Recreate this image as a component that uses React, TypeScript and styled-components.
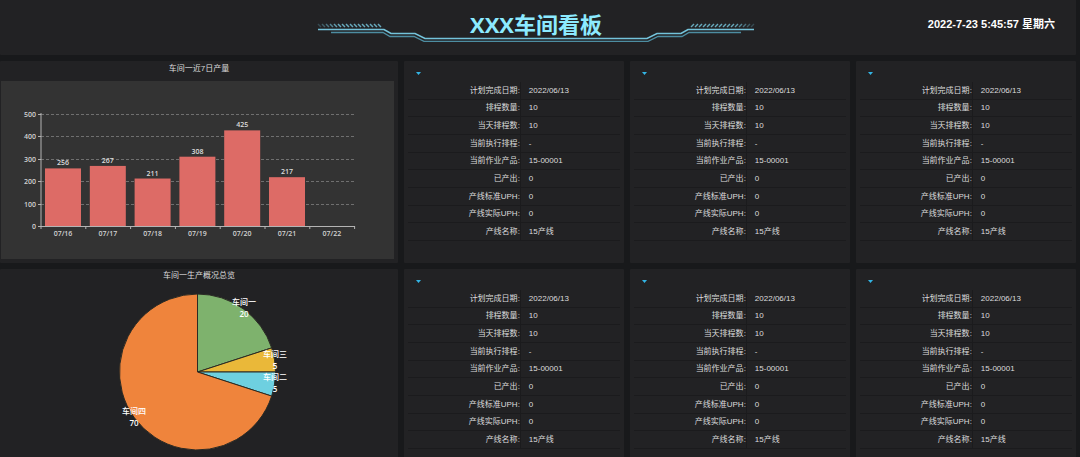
import React from "react";
import styled, { createGlobalStyle } from "styled-components";

const uiFont = `"Liberation Sans", "Noto Sans CJK SC", sans-serif`;
const chartFont = `"Open Sans", "Noto Sans CJK SC", sans-serif`;

const GlobalStyle = createGlobalStyle`
  * { box-sizing: border-box; }
  html, body { margin: 0; background: #18191b; }
  html { height: 100%; overflow: hidden; }
  body { height: 100%; overflow: hidden; color: #dcdcdc; font-family: ${uiFont}; font-size: 8px; }
`;

const Page = styled.div`
  display: flex;
  flex-direction: column;
  gap: 6px;
  padding-right: 4px;
`;

const Header = styled.header`
  display: grid;
  grid-template-columns: 1fr auto 1fr;
  background: #222224;
  border-radius: 0 0 1px 1px;
`;

const TitleBlock = styled.div`
  grid-column: 2;
  display: grid;
  grid-template-rows: 35px;
  justify-items: center;
  padding: 9px 4px 11px 0;
  > * { grid-area: 1 / 1; }
`;

const Title = styled.h1`
  margin: 0;
  font-family: ${chartFont};
  font-size: 22px;
  line-height: 30px;
  font-weight: 700;
  color: #8ceaff;
`;

const Ornament = styled.svg`
  display: block;
  align-self: end;
`;

const Clock = styled.time`
  justify-self: end;
  padding: 16px 21px 0 0;
  font: 700 11px/16px ${uiFont};
  color: #fff;
`;

const Board = styled.main`
  display: grid;
  grid-template-columns: 398fr 220fr 220fr 220fr;
  grid-auto-rows: 202px;
  gap: 6px;
`;

const Panel = styled.section`
  display: flex;
  flex-direction: column;
  min-width: 0;
  background: #222224;
  border-radius: 1px;
`;

const PanelTitle = styled.h2`
  margin: 0;
  font-size: 8px;
  line-height: 14px;
  font-weight: 400;
  text-align: center;
`;

const ChartTitle = styled(PanelTitle)`
  padding: 1px 0 5px;
`;

const ChartArea = styled.div`
  flex: 1;
  min-height: 0;
  margin: 0 4px 4px 1px;
  background: #333;
`;

const Drawing = styled.svg`
  display: block;
  width: 100%;
  height: 100%;
  font-family: ${chartFont};
  font-size: 7px;
  font-weight: 600;
`;

const PieLabel = styled.g`
  font-size: 8px;
  font-weight: 500;
  text-anchor: middle;
  fill: #fff;
`;

const PieValue = styled.text`
  font-weight: 600;
`;

const PieArea = styled.div`
  flex: 1;
  min-height: 0;
`;

const LineCard = styled(Panel)`
  padding: 8px 4px 0;
`;

const LineSelect = styled.button`
  align-self: flex-start;
  display: flex;
  align-items: center;
  height: 8px;
  margin: 0 0 5px 8px;
  padding: 0;
  border: 0;
  background: none;
`;

const DataTable = styled.table`
  width: 100%;
  height: 159px;
  border-collapse: collapse;
  table-layout: fixed;
`;

const Label = styled.th`
  width: 53%;
  padding: 1px 0 0;
  border-right: 1px solid #1b1b1d;
  border-bottom: 1px solid #1b1b1d;
  font-weight: 400;
  line-height: 12px;
  text-align: right;
  white-space: nowrap;
`;

const Value = styled.td`
  padding: 1px 0 0 8px;
  border-bottom: 1px solid #1b1b1d;
  line-height: 12px;
`;

const daily = [
  { day: "07/16", count: 256 },
  { day: "07/17", count: 267 },
  { day: "07/18", count: 211 },
  { day: "07/19", count: 308 },
  { day: "07/20", count: 425 },
  { day: "07/21", count: 217 },
  { day: "07/22", count: 0 },
];

const shares = [
  { name: "车间一", value: 20, color: "#7eb26d", x: 244, y: 21 },
  { name: "车间三", value: 5, color: "#eab839", x: 275, y: 73 },
  { name: "车间二", value: 5, color: "#6ed0e0", x: 275, y: 96 },
  { name: "车间四", value: 70, color: "#ef843c", x: 134, y: 130 },
];

const lineFields = [
  ["计划完成日期", "2022/06/13"],
  ["排程数量", "10"],
  ["当天排程数", "10"],
  ["当前执行排程", "-"],
  ["当前作业产品", "15-00001"],
  ["已产出", "0"],
  ["产线标准UPH", "0"],
  ["产线实际UPH", "0"],
  ["产线名称", "15产线"],
];

function HeaderOrnament() {
  const ticks = Array.from({ length: 16 }, (_, i) => i);
  const half = (
    <>
      {ticks.map((i) => (
        <path key={i} d={`M${1 + i * 4} 2l3 3`} stroke="#67a9bc" strokeWidth="1.5" opacity={Math.min(1, 0.3 + i * 0.15)} />
      ))}
      <path d="M1 7.5H67L74 11.5H98L108 16.5H219" stroke="#74c3da" strokeWidth="1.6" />
      <path d="M14 10.5H66L73 14.5H97L107 19.3H219" stroke="#4d8da1" strokeWidth="1.3" />
    </>
  );
  return (
    <Ornament width="438" height="22" viewBox="0 0 438 22" fill="none" aria-hidden="true">
      <g>{half}</g>
      <g transform="translate(438 0) scale(-1 1)">{half}</g>
    </Ornament>
  );
}

function BarChart() {
  const baseY = 145;
  const left = 40;
  const step = 44.8;
  const scale = 112.5 / 500;
  return (
    <Drawing viewBox="0 0 393 178" role="img" aria-label="车间一近7日产量">
      {[0, 100, 200, 300, 400, 500].map((v) => {
        const y = Math.round(baseY - v * scale) + 0.5;
        return (
          <g key={v}>
            {v > 0 && <path d={`M${left} ${y}H353`} stroke="#6f6f6f" strokeDasharray="3 2" />}
            <path d={`M${left - 3} ${y}H${left}`} stroke="#b4b4b4" />
            <text x={left - 5} y={y + 2.5} textAnchor="end" fill="#d2d2d2">{v}</text>
          </g>
        );
      })}
      {daily.map((d, i) => {
        const x = left + i * step;
        const h = d.count * scale;
        return (
          <g key={d.day}>
            {d.count > 0 && (
              <>
                <rect x={x + 4} y={baseY - h} width="36" height={h} fill="#dd6b66" />
                <text x={x + 22} y={baseY - h - 3} textAnchor="middle" fill="#ddd">{d.count}</text>
              </>
            )}
            <text x={x + 22} y={baseY + 10} textAnchor="middle" fill="#d2d2d2">{d.day}</text>
          </g>
        );
      })}
      <path d={`M${left} 32V${baseY + 3}M${left} ${baseY + 0.5}H354`} stroke="#b4b4b4" />
      {daily.map((d, i) => (
        <path key={d.day} d={`M${left + (i + 1) * step} ${baseY}v3`} stroke="#b4b4b4" />
      ))}
    </Drawing>
  );
}

function PieChart() {
  const cx = 197.5;
  const cy = 89;
  const r = 78;
  const point = (share: number) => {
    const a = (share / 100) * 2 * Math.PI;
    return `${cx + r * Math.sin(a)} ${cy - r * Math.cos(a)}`;
  };
  let start = 0;
  const slices = shares.map((s) => {
    const from = start;
    start += s.value;
    return (
      <path
        key={s.name}
        d={`M${cx} ${cy}L${point(from)}A${r} ${r} 0 ${s.value > 50 ? 1 : 0} 1 ${point(start)}Z`}
        fill={s.color}
        stroke="#2a2a24"
      />
    );
  });
  return (
    <Drawing viewBox="0 0 398 188" role="img" aria-label="车间一生产概况总览">
      {slices}
      {shares.map((s) => (
        <PieLabel key={s.name}>
          <text x={s.x} y={s.y + 1}>{s.name}</text>
          <PieValue x={s.x} y={s.y + 13}>{s.value}</PieValue>
        </PieLabel>
      ))}
    </Drawing>
  );
}

function ProductionLine() {
  return (
    <LineCard>
      <LineSelect type="button" aria-label="选择产线">
        <svg width="5" height="3" viewBox="0 0 5 3" aria-hidden="true">
          <path d="M0 0H5L2.5 3Z" fill="#33b5e5" />
        </svg>
      </LineSelect>
      <DataTable>
        <tbody>
          {lineFields.map(([label, value]) => (
            <tr key={label}>
              <Label scope="row">{label}:</Label>
              <Value>{value}</Value>
            </tr>
          ))}
        </tbody>
      </DataTable>
    </LineCard>
  );
}

export default function App() {
  return (
    <>
      <GlobalStyle />
      <Page>
        <Header>
          <TitleBlock>
            <HeaderOrnament />
            <Title>XXX车间看板</Title>
          </TitleBlock>
          <Clock dateTime="2022-07-23T05:45:57">2022-7-23 5:45:57 星期六</Clock>
        </Header>
        <Board>
          <Panel>
            <ChartTitle>车间一近7日产量</ChartTitle>
            <ChartArea>
              <BarChart />
            </ChartArea>
          </Panel>
          <ProductionLine />
          <ProductionLine />
          <ProductionLine />
          <Panel>
            <PanelTitle>车间一生产概况总览</PanelTitle>
            <PieArea>
              <PieChart />
            </PieArea>
          </Panel>
          <ProductionLine />
          <ProductionLine />
          <ProductionLine />
        </Board>
      </Page>
    </>
  );
}
